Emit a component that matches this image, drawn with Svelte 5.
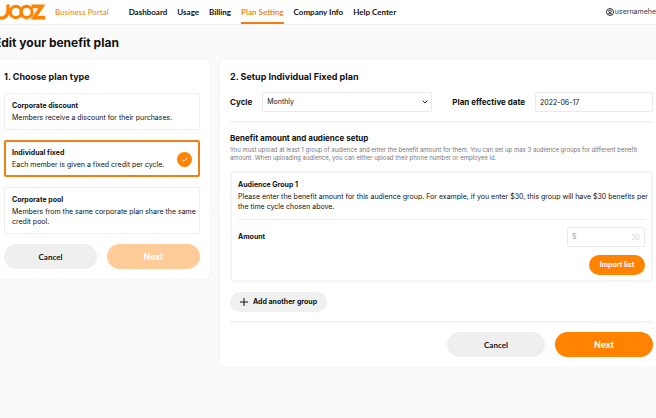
<script>
  const nav = ['Dashboard', 'Usage', 'Billing', 'Plan Setting', 'Company Info', 'Help Center'];
  const plans = [
    { id: 'discount', name: 'Corporate discount', text: 'Members receive a discount for their purchases.' },
    { id: 'fixed', name: 'Individual fixed', text: 'Each member is given a fixed credit per cycle.' },
    { id: 'pool', name: 'Corporate pool', text: 'Members from the same corporate plan share the same credit pool.' }
  ];
  let selected = $state('fixed');
  let cycle = $state('Monthly');
  let date = $state('2022-06-17');
  let amount = $state('');
</script>

<div class="app">
  <header>
    <a class="logo" href="#home" aria-label="JOOZ">
      <svg width="48" height="18" viewBox="0 0 48 18" fill="none" stroke="#ff8200">
        <path d="M8 1.5V8.5A7 7 0 0 1 -1 14.8" stroke-width="3.4" />
        <circle cx="15.8" cy="9" r="5.6" stroke-width="3.2" />
        <circle cx="26.6" cy="9" r="5.6" stroke-width="3.2" />
        <path d="M31.5 3.4H42L34 14.6H45.3" stroke-width="3.6" />
      </svg>
    </a>
    <a class="portal" href="#portal">Business Portal</a>
    <nav>
      {#each nav as item}
        <a href="#{item}" class:active={item === 'Plan Setting'}>{item}</a>
      {/each}
    </nav>
    <a class="user" href="#account">
      <svg width="8" height="8" viewBox="0 0 16 16" fill="none" stroke="#222" stroke-width="1.8">
        <circle cx="8" cy="8" r="7" />
        <circle cx="8" cy="6.5" r="2.6" />
        <path d="M3.5 13C4 10.5 12 10.5 12.5 13" />
      </svg>
      <span>usernamehe</span>
    </a>
  </header>

  <main>
    <h1>Edit your benefit plan</h1>
    <div class="columns">
      <section class="card">
        <h2>1. Choose plan type</h2>
        <div class="plans">
          {#each plans as plan}
            <button class="plan" class:selected={selected === plan.id} onclick={() => (selected = plan.id)}>
              <span class="copy">
                <strong>{plan.name}</strong>
                <span>{plan.text}</span>
              </span>
              {#if selected === plan.id}
                <svg class="check" width="15" height="15" viewBox="0 0 15 15" fill="none">
                  <circle cx="7.5" cy="7.5" r="7.5" fill="#ff8200" />
                  <path d="M5 7.5L7 9.3L10.3 6" stroke="#fff" stroke-width="1" />
                </svg>
              {/if}
            </button>
          {/each}
        </div>
        <div class="actions">
          <button class="pill">Cancel</button>
          <button class="pill next faded">Next</button>
        </div>
      </section>

      <section class="card">
        <h2>2. Setup Individual Fixed plan</h2>
        <div class="fields">
          <label for="cycle">Cycle</label>
          <div class="select">
            <select id="cycle" bind:value={cycle}>
              <option>Monthly</option>
              <option>Weekly</option>
            </select>
            <svg width="6" height="4" viewBox="0 0 6 4" fill="none" stroke="#333"><path d="M0.7 0.7L3 3L5.3 0.7" /></svg>
          </div>
          <label class="date-label" for="date">Plan effective date</label>
          <input id="date" type="text" bind:value={date} />
        </div>
        <hr />
        <h3>Benefit amount and audience setup</h3>
        <p class="hint">You must upload at least 1 group of audience and enter the benefit amount for them. You can set up max 3 audience groups for different benefit amount. When uploading audience, you can either upload their phone number or employee id.</p>
        <div class="group">
          <h4>Audience Group 1</h4>
          <p class="about">Please enter the benefit amount for this audience group. For example, if you enter $30, this group will have $30 benefits per the time cycle chosen above.</p>
          <hr />
          <div class="amount">
            <label for="amount">Amount</label>
            <div class="money">
              <span>$</span>
              <input id="amount" type="text" placeholder="30" bind:value={amount} />
            </div>
          </div>
          <button class="import">Import list</button>
        </div>
        <button class="add">
          <svg width="8" height="8" viewBox="0 0 8 8" stroke="#111"><path d="M4 0V8M0 4H8" /></svg>
          Add another group
        </button>
        <hr />
        <div class="actions end">
          <button class="pill">Cancel</button>
          <button class="pill next">Next</button>
        </div>
      </section>
    </div>
  </main>
</div>

<style>
  :global(body) { background: #fafafa; }
  .app {
    min-height: 100vh;
    overflow: hidden;
    font-family: Inter, 'Liberation Sans', sans-serif;
    font-size: 7px;
    line-height: 10px;
    color: #111;
  }
  .app * { box-sizing: border-box; }
  h1, h2, h3, h4, p { margin: 0; }
  a { color: inherit; text-decoration: none; }
  button, input, select { font: inherit; color: inherit; margin: 0; border-radius: 2px; }
  button { border: 0; padding: 0; cursor: pointer; }

  header {
    display: flex;
    align-items: center;
    height: 25px;
    background: #fff;
    border-bottom: 1px solid #f0f0f0;
    font-family: Lato, 'Liberation Sans', sans-serif;
    font-size: 8px;
    font-weight: 700;
    white-space: nowrap;
  }
  .logo { display: flex; width: 55px; }
  .portal { color: #ec8b25; font-weight: 500; }
  nav { display: flex; gap: 10px; margin-left: 20px; align-self: stretch; }
  nav a { display: flex; align-items: center; border: solid transparent; border-width: 2px 0; }
  nav .active { color: #f08a1c; border-bottom-color: #f47b10; }
  .user {
    display: flex;
    align-items: center;
    gap: 1px;
    margin-left: auto;
    font-family: Inter, sans-serif;
    font-size: 7px;
    font-weight: 400;
    color: #333;
  }

  main { margin: 0 -7px 0 -6px; padding-top: 10px; }
  h1 { font-size: 12px; line-height: 16px; font-weight: 700; }
  .columns {
    display: grid;
    grid-template-columns: 216px 1fr;
    gap: 10px;
    align-items: start;
    margin-top: 9px;
  }
  .card {
    padding: 10px;
    background: #fff;
    border-radius: 5px;
    box-shadow: 0 0 5px rgba(0, 0, 0, 0.03);
  }
  h2 { font-size: 9px; line-height: 14px; font-weight: 700; margin-bottom: 8px; }

  .plans { display: grid; gap: 10px; padding-top: 1px; }
  .plan {
    display: flex;
    align-items: center;
    justify-content: space-between;
    padding: 7px 2px 6px 7px;
    background: #fff;
    border: 1px solid #eee;
    text-align: left;
  }
  .plan.selected { border: 2px solid #ef8210; padding: 6px 6px 5px; }
  .copy { display: grid; gap: 2px; }
  .copy strong { font-weight: 700; }
  .actions { display: grid; grid-template-columns: 1fr 1fr; gap: 10px; margin-top: 10px; }
  .actions.end { grid-template-columns: 98px 98px; justify-content: end; margin-top: 9px; }
  .pill {
    height: 25px;
    border-radius: 13px;
    background: #efefef;
    font-family: Lato, 'Liberation Sans', sans-serif;
    font-size: 8px;
    font-weight: 700;
  }
  .next { background: #ff8200; color: #fff; font-size: 9px; font-weight: 900; }
  .faded { background: #ffcb99; }

  .fields { display: flex; align-items: center; }
  .fields label { font-size: 8px; font-weight: 700; white-space: nowrap; }
  .select { position: relative; flex: 1; margin-left: 10px; }
  .select svg { position: absolute; right: 4px; top: 8px; }
  select, input {
    display: block;
    width: 100%;
    height: 20px;
    padding: 0 4px;
    background: #fff;
    border: 1px solid #eaeaea;
    appearance: none;
    outline: 0;
  }
  .date-label { margin: 0 10px 0 20px; }
  .fields input { width: 118px; }
  hr { width: 100%; height: 2px; margin: 9px 0; border: 0; background: #f4f4f4; }
  h3 { font-size: 8px; line-height: 12px; font-weight: 700; }
  .hint { margin: 2px 0 9px; font-size: 6px; line-height: 8px; color: #777; }
  .group { padding: 7px 6px 5px; border: 2px solid #f5f5f5; border-radius: 3px; }
  .about { margin-right: -5px; }
  h4 { font-size: 7px; line-height: 10px; font-weight: 700; margin-bottom: 2px; }
  .group hr { height: 1px; margin: 7px 0; background: #eee; }
  .amount { display: flex; align-items: center; justify-content: space-between; font-weight: 700; }
  .money {
    display: flex;
    align-items: center;
    width: 78px;
    height: 20px;
    padding: 0 4px;
    border: 1px solid #eaeaea;
    border-radius: 2px;
    color: #aaa;
    font-weight: 400;
  }
  .money input { min-width: 0; height: 16px; border: 0; padding: 0; text-align: right; }
  .money input::placeholder { color: #d5d5d5; opacity: 1; }
  .import {
    display: block;
    width: 56px;
    height: 20px;
    margin: 8px 0 0 auto;
    border-radius: 10px;
    background: #ff8200;
    color: #fff;
    font-weight: 700;
  }
  .add {
    display: flex;
    align-items: center;
    gap: 5px;
    height: 20px;
    margin-top: 10px;
    padding: 0 10px;
    border-radius: 10px;
    background: #f0f0f0;
    font-weight: 700;
  }
</style>
